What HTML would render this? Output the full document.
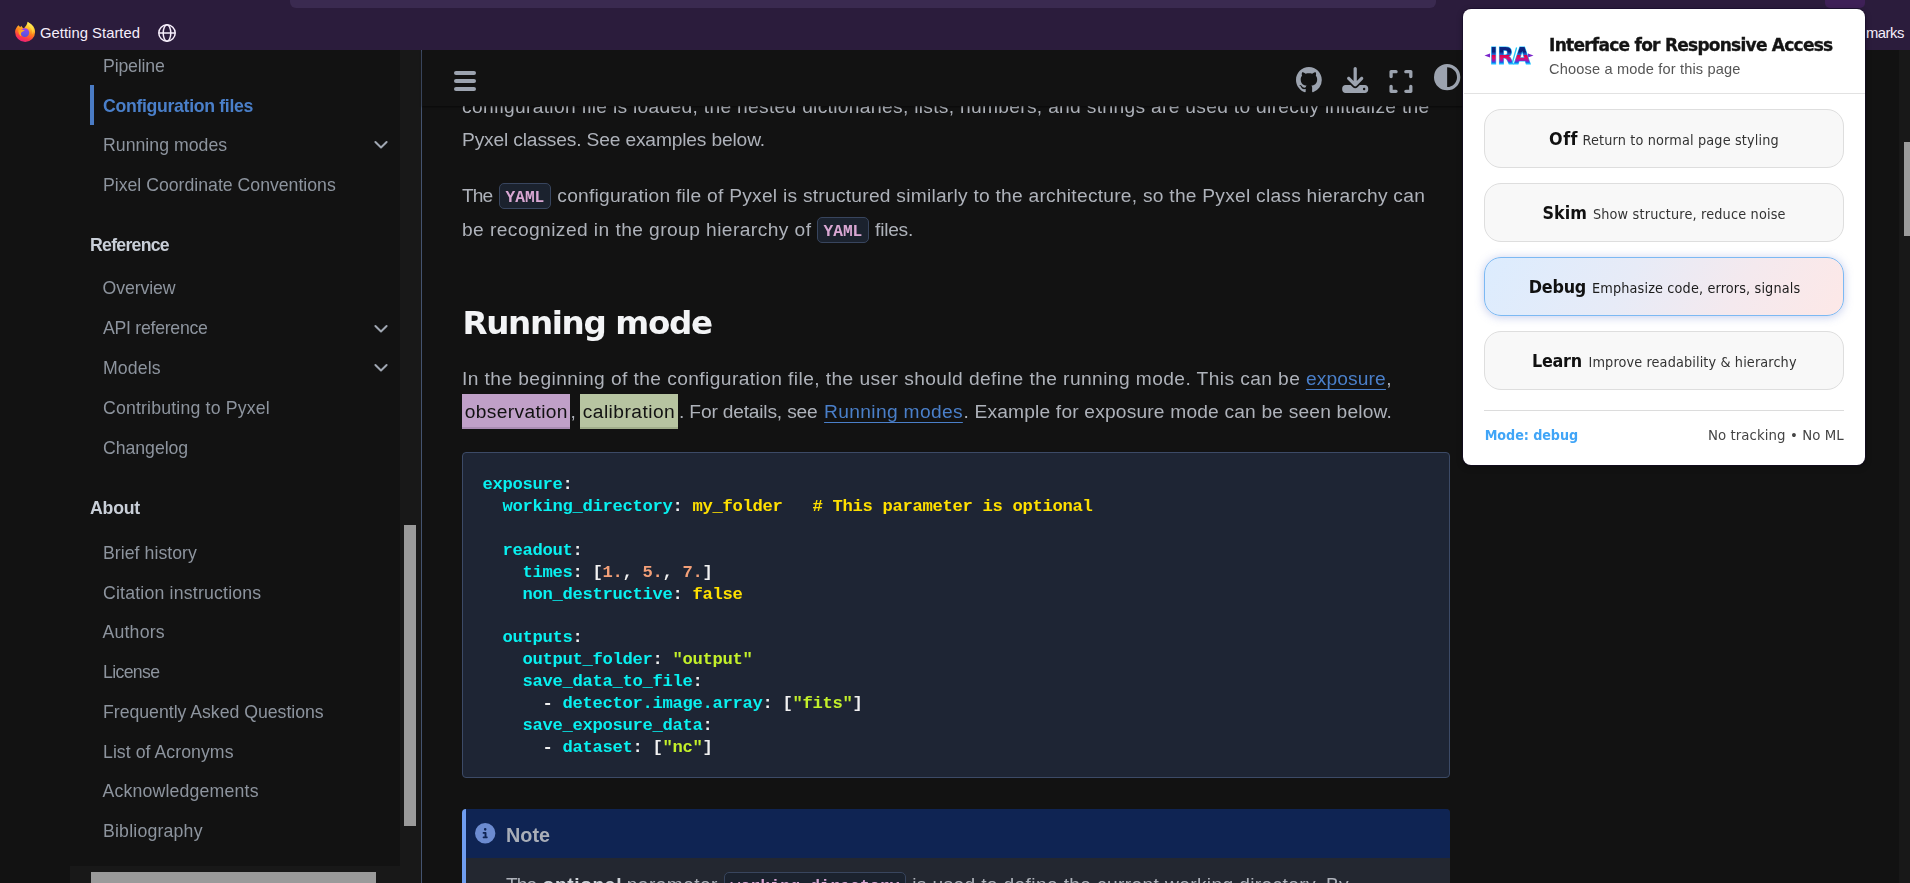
<!DOCTYPE html>
<html lang="en"><head><meta charset="utf-8"><title>Configuration files - Pyxel</title>
<style>
html,body{margin:0;padding:0;background:#121212;}
body{width:1910px;height:883px;overflow:hidden;position:relative;font-family:"Liberation Sans",sans-serif;}
.b{position:absolute;box-sizing:border-box;}
.t{position:absolute;line-height:0;white-space:pre;display:block;}
nav,main,header{will-change:transform;position:absolute;left:0;top:0;width:1910px;height:883px;}
.u{text-decoration:underline;text-decoration-thickness:1px;text-underline-offset:3.8px;}
svg{position:absolute;overflow:visible;}
</style></head><body>

<div class="b" style="left:400.00px;top:50.00px;width:21.00px;height:833.00px;background:#181818;"></div>
<div class="b" style="left:421.00px;top:50.00px;width:1.00px;height:833.00px;background:#44536f;"></div>
<div class="b" style="left:70.00px;top:866.00px;width:330.00px;height:17.00px;background:#181818;"></div>
<div class="b" style="left:91.00px;top:872.00px;width:285.00px;height:11.00px;background:#9a9a9a;"></div>
<div class="b" style="left:404.00px;top:525.00px;width:12.00px;height:301.00px;background:#9a9a9a;"></div>
<div class="b" style="left:1899.00px;top:50.00px;width:11.00px;height:833.00px;background:#181818;"></div>
<div class="b" style="left:1904.00px;top:142.00px;width:6.00px;height:94.00px;background:#9a9a9a;"></div>
<nav>
<div class="b" style="left:90.00px;top:85.00px;width:4.00px;height:40.00px;background:#4a7bc4;"></div>
<span id="t1" class="t" style="left:103.00px;top:66.10px;font-size:17.70px;color:#8d949e;letter-spacing:-0.162px;">Pipeline</span>
<span id="t2" class="t" style="left:103.00px;top:105.70px;font-size:17.70px;color:#4a7fc9;font-weight:700;letter-spacing:-0.324px;">Configuration files</span>
<span id="t3" class="t" style="left:103.00px;top:145.40px;font-size:17.70px;color:#8d949e;letter-spacing:0.017px;">Running modes</span>
<span id="t4" class="t" style="left:103.00px;top:185.00px;font-size:17.70px;color:#8d949e;letter-spacing:-0.009px;">Pixel Coordinate Conventions</span>
<span id="t5" class="t" style="left:90.00px;top:244.80px;font-size:17.70px;color:#c9cfd8;font-weight:700;letter-spacing:-0.731px;">Reference</span>
<span id="t6" class="t" style="left:102.60px;top:288.30px;font-size:17.70px;color:#8d949e;letter-spacing:-0.117px;">Overview</span>
<span id="t7" class="t" style="left:103.00px;top:328.40px;font-size:17.70px;color:#8d949e;letter-spacing:-0.271px;">API reference</span>
<span id="t8" class="t" style="left:103.00px;top:368.30px;font-size:17.70px;color:#8d949e;letter-spacing:0.114px;">Models</span>
<span id="t9" class="t" style="left:103.00px;top:408.20px;font-size:17.70px;color:#8d949e;letter-spacing:0.174px;">Contributing to Pyxel</span>
<span id="t10" class="t" style="left:103.00px;top:447.80px;font-size:17.70px;color:#8d949e;letter-spacing:-0.045px;">Changelog</span>
<span id="t11" class="t" style="left:90.00px;top:508.10px;font-size:17.70px;color:#c9cfd8;font-weight:700;letter-spacing:-0.220px;">About</span>
<span id="t12" class="t" style="left:103.00px;top:553.00px;font-size:17.70px;color:#8d949e;letter-spacing:0.042px;">Brief history</span>
<span id="t13" class="t" style="left:103.00px;top:592.70px;font-size:17.70px;color:#8d949e;letter-spacing:0.193px;">Citation instructions</span>
<span id="t14" class="t" style="left:102.50px;top:632.40px;font-size:17.70px;color:#8d949e;letter-spacing:0.189px;">Authors</span>
<span id="t15" class="t" style="left:103.00px;top:672.10px;font-size:17.70px;color:#8d949e;letter-spacing:-0.645px;">License</span>
<span id="t16" class="t" style="left:103.00px;top:711.90px;font-size:17.70px;color:#8d949e;letter-spacing:-0.021px;">Frequently Asked Questions</span>
<span id="t17" class="t" style="left:103.00px;top:751.60px;font-size:17.70px;color:#8d949e;letter-spacing:0.049px;">List of Acronyms</span>
<span id="t18" class="t" style="left:102.50px;top:791.30px;font-size:17.70px;color:#8d949e;letter-spacing:0.174px;">Acknowledgements</span>
<span id="t19" class="t" style="left:103.00px;top:831.00px;font-size:17.70px;color:#8d949e;letter-spacing:0.196px;">Bibliography</span>
<svg style="left:372.5px;top:138.5px" width="16" height="12" viewBox="0 0 16 12"><path d="M2.4 3 L8 8.500 L13.600 3" fill="none" stroke="#a0a7b2" stroke-width="2" stroke-linecap="round" stroke-linejoin="round"/></svg>
<svg style="left:372.5px;top:322.7px" width="16" height="12" viewBox="0 0 16 12"><path d="M2.4 3 L8 8.500 L13.600 3" fill="none" stroke="#a0a7b2" stroke-width="2" stroke-linecap="round" stroke-linejoin="round"/></svg>
<svg style="left:372.5px;top:362.3px" width="16" height="12" viewBox="0 0 16 12"><path d="M2.4 3 L8 8.500 L13.600 3" fill="none" stroke="#a0a7b2" stroke-width="2" stroke-linecap="round" stroke-linejoin="round"/></svg>
</nav>
<main>
<div class="b" style="left:499.00px;top:183.00px;width:52.00px;height:26.00px;background:#1b222e;border:1px solid #38455e;border-radius:5px;"></div>
<div class="b" style="left:817.00px;top:217.00px;width:52.00px;height:26.00px;background:#1b222e;border:1px solid #38455e;border-radius:5px;"></div>
<div class="b" style="left:462.00px;top:394.00px;width:108.00px;height:34.60px;background:#c0a0c8;border-bottom:2px solid #a98bb2;"></div>
<div class="b" style="left:580.00px;top:394.00px;width:98.00px;height:34.60px;background:#b7c4a1;border-bottom:2px solid #a0ad8a;"></div>
<span id="t20" class="t" style="left:462.00px;top:106.70px;font-size:19.20px;color:#aeb2ba;letter-spacing:0.309px;">configuration file is loaded, the nested dictionaries, lists, numbers, and strings are used to directly initialize the</span>
<span id="t21" class="t" style="left:462.00px;top:139.50px;font-size:19.20px;color:#aeb2ba;letter-spacing:-0.155px;">Pyxel classes. See examples below.</span>
<span id="t22" class="t" style="left:462.00px;top:195.60px;font-size:19.20px;color:#aeb2ba;letter-spacing:-0.889px;">The</span>
<span id="t23" class="t" style="left:505.50px;top:197.60px;font-size:16.20px;color:#d9a7d3;font-weight:700;font-family:'Liberation Mono', monospace;letter-spacing:-0.020px;">YAML</span>
<span id="t24" class="t" style="left:557.30px;top:195.60px;font-size:19.20px;color:#aeb2ba;letter-spacing:0.251px;">configuration file of Pyxel is structured similarly to the architecture, so the Pyxel class hierarchy can</span>
<span id="t25" class="t" style="left:462.00px;top:229.50px;font-size:19.20px;color:#aeb2ba;letter-spacing:0.426px;">be recognized in the group hierarchy of</span>
<span id="t26" class="t" style="left:823.50px;top:231.50px;font-size:16.20px;color:#d9a7d3;font-weight:700;font-family:'Liberation Mono', monospace;letter-spacing:-0.020px;">YAML</span>
<span id="t27" class="t" style="left:875.10px;top:229.50px;font-size:19.20px;color:#aeb2ba;letter-spacing:-0.251px;">files.</span>
<h2 id="t28" class="t" style="left:462.50px;top:322.50px;font-size:32.60px;color:#f3f4f6;font-weight:700;font-family:'DejaVu Sans', 'Liberation Sans', sans-serif;letter-spacing:-1.358px;margin:0;">Running mode</h2>
<span id="t29" class="t" style="left:462.00px;top:378.80px;font-size:19.20px;color:#aeb2ba;letter-spacing:0.413px;">In the beginning of the configuration file, the user should define the running mode. This can be</span>
<span id="t30" class="t u" style="left:1305.90px;top:378.80px;font-size:19.20px;color:#4a7fc9;letter-spacing:0.137px;">exposure</span>
<span id="t31" class="t" style="left:1386.20px;top:378.80px;font-size:19.20px;color:#aeb2ba;">,</span>
<span id="t32" class="t" style="left:464.70px;top:411.60px;font-size:19.20px;color:#121212;letter-spacing:0.360px;">observation</span>
<span id="t33" class="t" style="left:570.60px;top:411.60px;font-size:19.20px;color:#aeb2ba;">,</span>
<span id="t34" class="t" style="left:582.70px;top:411.60px;font-size:19.20px;color:#121212;letter-spacing:0.463px;">calibration</span>
<span id="t35" class="t" style="left:679.10px;top:411.60px;font-size:19.20px;color:#aeb2ba;letter-spacing:-0.191px;">. For details, see</span>
<span id="t36" class="t u" style="left:824.10px;top:411.60px;font-size:19.20px;color:#4a7fc9;letter-spacing:0.333px;">Running modes</span>
<span id="t37" class="t" style="left:963.40px;top:411.60px;font-size:19.20px;color:#aeb2ba;letter-spacing:0.183px;">. Example for exposure mode can be seen below.</span>
<div class="b" style="left:462.00px;top:452.00px;width:988.00px;height:325.50px;background:#1e2534;border:1px solid #3c4a66;border-radius:4px;"></div>
<pre style="margin:0">
<span id="t38" class="t" style="left:482.60px;top:485.00px;font-size:17.20px;color:#08f0f0;font-weight:700;font-family:'Liberation Mono', monospace;letter-spacing:-0.320px;">exposure</span>
<span id="t39" class="t" style="left:562.60px;top:485.00px;font-size:17.20px;color:#f1f1f1;font-weight:700;font-family:'Liberation Mono', monospace;letter-spacing:-0.320px;">:</span>
<span id="t40" class="t" style="left:502.60px;top:507.00px;font-size:17.20px;color:#08f0f0;font-weight:700;font-family:'Liberation Mono', monospace;letter-spacing:-0.320px;">working_directory</span>
<span id="t41" class="t" style="left:672.60px;top:507.00px;font-size:17.20px;color:#f1f1f1;font-weight:700;font-family:'Liberation Mono', monospace;letter-spacing:-0.320px;">:</span>
<span id="t42" class="t" style="left:692.60px;top:507.00px;font-size:17.20px;color:#ffe000;font-weight:700;font-family:'Liberation Mono', monospace;letter-spacing:-0.320px;">my_folder</span>
<span id="t43" class="t" style="left:812.60px;top:507.00px;font-size:17.20px;color:#ffe000;font-weight:700;font-family:'Liberation Mono', monospace;letter-spacing:-0.320px;"># This parameter is optional</span>
<span id="t44" class="t" style="left:502.60px;top:550.60px;font-size:17.20px;color:#08f0f0;font-weight:700;font-family:'Liberation Mono', monospace;letter-spacing:-0.320px;">readout</span>
<span id="t45" class="t" style="left:572.60px;top:550.60px;font-size:17.20px;color:#f1f1f1;font-weight:700;font-family:'Liberation Mono', monospace;letter-spacing:-0.320px;">:</span>
<span id="t46" class="t" style="left:522.60px;top:572.60px;font-size:17.20px;color:#08f0f0;font-weight:700;font-family:'Liberation Mono', monospace;letter-spacing:-0.320px;">times</span>
<span id="t47" class="t" style="left:572.60px;top:572.60px;font-size:17.20px;color:#f1f1f1;font-weight:700;font-family:'Liberation Mono', monospace;letter-spacing:-0.320px;">:</span>
<span id="t48" class="t" style="left:592.60px;top:572.60px;font-size:17.20px;color:#f1f1f1;font-weight:700;font-family:'Liberation Mono', monospace;letter-spacing:-0.320px;">[</span>
<span id="t49" class="t" style="left:602.60px;top:572.60px;font-size:17.20px;color:#f3a078;font-weight:700;font-family:'Liberation Mono', monospace;letter-spacing:-0.320px;">1.</span>
<span id="t50" class="t" style="left:622.60px;top:572.60px;font-size:17.20px;color:#f1f1f1;font-weight:700;font-family:'Liberation Mono', monospace;letter-spacing:-0.320px;">, </span>
<span id="t51" class="t" style="left:642.60px;top:572.60px;font-size:17.20px;color:#f3a078;font-weight:700;font-family:'Liberation Mono', monospace;letter-spacing:-0.320px;">5.</span>
<span id="t52" class="t" style="left:662.60px;top:572.60px;font-size:17.20px;color:#f1f1f1;font-weight:700;font-family:'Liberation Mono', monospace;letter-spacing:-0.320px;">, </span>
<span id="t53" class="t" style="left:682.60px;top:572.60px;font-size:17.20px;color:#f3a078;font-weight:700;font-family:'Liberation Mono', monospace;letter-spacing:-0.320px;">7.</span>
<span id="t54" class="t" style="left:702.60px;top:572.60px;font-size:17.20px;color:#f1f1f1;font-weight:700;font-family:'Liberation Mono', monospace;letter-spacing:-0.320px;">]</span>
<span id="t55" class="t" style="left:522.60px;top:594.50px;font-size:17.20px;color:#08f0f0;font-weight:700;font-family:'Liberation Mono', monospace;letter-spacing:-0.320px;">non_destructive</span>
<span id="t56" class="t" style="left:672.60px;top:594.50px;font-size:17.20px;color:#f1f1f1;font-weight:700;font-family:'Liberation Mono', monospace;letter-spacing:-0.320px;">:</span>
<span id="t57" class="t" style="left:692.60px;top:594.50px;font-size:17.20px;color:#ffe000;font-weight:700;font-family:'Liberation Mono', monospace;letter-spacing:-0.320px;">false</span>
<span id="t58" class="t" style="left:502.60px;top:637.90px;font-size:17.20px;color:#08f0f0;font-weight:700;font-family:'Liberation Mono', monospace;letter-spacing:-0.320px;">outputs</span>
<span id="t59" class="t" style="left:572.60px;top:637.90px;font-size:17.20px;color:#f1f1f1;font-weight:700;font-family:'Liberation Mono', monospace;letter-spacing:-0.320px;">:</span>
<span id="t60" class="t" style="left:522.60px;top:659.80px;font-size:17.20px;color:#08f0f0;font-weight:700;font-family:'Liberation Mono', monospace;letter-spacing:-0.320px;">output_folder</span>
<span id="t61" class="t" style="left:652.60px;top:659.80px;font-size:17.20px;color:#f1f1f1;font-weight:700;font-family:'Liberation Mono', monospace;letter-spacing:-0.320px;">:</span>
<span id="t62" class="t" style="left:672.60px;top:659.80px;font-size:17.20px;color:#c3f02a;font-weight:700;font-family:'Liberation Mono', monospace;letter-spacing:-0.320px;">"output"</span>
<span id="t63" class="t" style="left:522.60px;top:681.70px;font-size:17.20px;color:#08f0f0;font-weight:700;font-family:'Liberation Mono', monospace;letter-spacing:-0.320px;">save_data_to_file</span>
<span id="t64" class="t" style="left:692.60px;top:681.70px;font-size:17.20px;color:#f1f1f1;font-weight:700;font-family:'Liberation Mono', monospace;letter-spacing:-0.320px;">:</span>
<span id="t65" class="t" style="left:542.60px;top:703.60px;font-size:17.20px;color:#f1f1f1;font-weight:700;font-family:'Liberation Mono', monospace;letter-spacing:-0.320px;">- </span>
<span id="t66" class="t" style="left:562.60px;top:703.60px;font-size:17.20px;color:#08f0f0;font-weight:700;font-family:'Liberation Mono', monospace;letter-spacing:-0.320px;">detector.image.array</span>
<span id="t67" class="t" style="left:762.60px;top:703.60px;font-size:17.20px;color:#f1f1f1;font-weight:700;font-family:'Liberation Mono', monospace;letter-spacing:-0.320px;">:</span>
<span id="t68" class="t" style="left:782.60px;top:703.60px;font-size:17.20px;color:#f1f1f1;font-weight:700;font-family:'Liberation Mono', monospace;letter-spacing:-0.320px;">[</span>
<span id="t69" class="t" style="left:792.60px;top:703.60px;font-size:17.20px;color:#c3f02a;font-weight:700;font-family:'Liberation Mono', monospace;letter-spacing:-0.320px;">"fits"</span>
<span id="t70" class="t" style="left:852.60px;top:703.60px;font-size:17.20px;color:#f1f1f1;font-weight:700;font-family:'Liberation Mono', monospace;letter-spacing:-0.320px;">]</span>
<span id="t71" class="t" style="left:522.60px;top:725.50px;font-size:17.20px;color:#08f0f0;font-weight:700;font-family:'Liberation Mono', monospace;letter-spacing:-0.320px;">save_exposure_data</span>
<span id="t72" class="t" style="left:702.60px;top:725.50px;font-size:17.20px;color:#f1f1f1;font-weight:700;font-family:'Liberation Mono', monospace;letter-spacing:-0.320px;">:</span>
<span id="t73" class="t" style="left:542.60px;top:747.50px;font-size:17.20px;color:#f1f1f1;font-weight:700;font-family:'Liberation Mono', monospace;letter-spacing:-0.320px;">- </span>
<span id="t74" class="t" style="left:562.60px;top:747.50px;font-size:17.20px;color:#08f0f0;font-weight:700;font-family:'Liberation Mono', monospace;letter-spacing:-0.320px;">dataset</span>
<span id="t75" class="t" style="left:632.60px;top:747.50px;font-size:17.20px;color:#f1f1f1;font-weight:700;font-family:'Liberation Mono', monospace;letter-spacing:-0.320px;">:</span>
<span id="t76" class="t" style="left:652.60px;top:747.50px;font-size:17.20px;color:#f1f1f1;font-weight:700;font-family:'Liberation Mono', monospace;letter-spacing:-0.320px;">[</span>
<span id="t77" class="t" style="left:662.60px;top:747.50px;font-size:17.20px;color:#c3f02a;font-weight:700;font-family:'Liberation Mono', monospace;letter-spacing:-0.320px;">"nc"</span>
<span id="t78" class="t" style="left:702.60px;top:747.50px;font-size:17.20px;color:#f1f1f1;font-weight:700;font-family:'Liberation Mono', monospace;letter-spacing:-0.320px;">]</span>
</pre>
<div class="b" style="left:462.00px;top:809.00px;width:988.00px;height:80.00px;background:#232730;border-left:4px solid #6f9df0;border-radius:4px 4px 0 0;"></div>
<div class="b" style="left:466.00px;top:809.00px;width:984.00px;height:49.00px;background:#0f2453;border-radius:0 4px 0 0;"></div>
<svg style="left:475.4px;top:823.3px" width="20.4" height="20.4" viewBox="0 0 512 512"><path fill="#6c8bd0" d="M256 512A256 256 0 1 0 256 0a256 256 0 1 0 0 512zM216 336h24V272H216c-13.300 0-24-10.700-24-24s10.700-24 24-24h48c13.300 0 24 10.700 24 24v88h8c13.300 0 24 10.700 24 24s-10.700 24-24 24H216c-13.300 0-24-10.700-24-24s10.700-24 24-24zm40-208a32 32 0 1 1 0 64 32 32 0 1 1 0-64z"/></svg>
<div class="b" style="left:724.00px;top:872.00px;width:182.00px;height:26.00px;background:#1b222e;border:1px solid #38455e;border-radius:5px;"></div>
<span id="t79" class="t" style="left:506.00px;top:835.10px;font-size:19.80px;color:#a9aeb8;font-weight:700;letter-spacing:0.010px;">Note</span>
<span id="t80" class="t" style="left:506.00px;top:885.00px;font-size:19.20px;color:#aeb2ba;letter-spacing:-0.889px;">The</span>
<span id="t81" class="t" style="left:542.60px;top:885.00px;font-size:19.20px;color:#d0d4da;font-weight:700;letter-spacing:0.613px;">optional</span>
<span id="t82" class="t" style="left:626.80px;top:885.00px;font-size:19.20px;color:#aeb2ba;letter-spacing:0.406px;">parameter</span>
<span id="t83" class="t" style="left:730.50px;top:887.00px;font-size:16.20px;color:#d9a7d3;font-weight:700;font-family:'Liberation Mono', monospace;letter-spacing:0.241px;">working_directory</span>
<span id="t84" class="t" style="left:912.20px;top:885.00px;font-size:19.20px;color:#aeb2ba;letter-spacing:0.354px;">is used to define the current working directory. By</span>
</main>
<div class="b" style="left:422.00px;top:50.00px;width:1043.00px;height:56.00px;background:#121212;box-shadow:0 1px 2px rgba(0,0,0,.55);"></div>
<header>
<div class="b" style="left:453.80px;top:71.00px;width:22.60px;height:4.20px;background:#9ca3af;border-radius:2.1px;"></div>
<div class="b" style="left:453.80px;top:79.00px;width:22.60px;height:4.20px;background:#9ca3af;border-radius:2.1px;"></div>
<div class="b" style="left:453.80px;top:87.00px;width:22.60px;height:4.20px;background:#9ca3af;border-radius:2.1px;"></div>
<svg style="left:1296.2px;top:67.4px" width="25.8" height="25.2" viewBox="0 0 16 15.62"><path fill="#9ca3af" d="M8 0C3.58 0 0 3.58 0 8c0 3.54 2.29 6.53 5.47 7.59.4.07.55-.17.55-.38 0-.19-.01-.82-.01-1.49-2.01.37-2.53-.49-2.69-.94-.09-.23-.48-.94-.82-1.13-.28-.15-.68-.52-.01-.53.63-.01 1.08.58 1.23.82.72 1.21 1.87.87 2.33.66.07-.52.28-.87.51-1.07-1.78-.2-3.64-.89-3.64-3.95 0-.87.31-1.59.82-2.15-.08-.2-.36-1.02.08-2.12 0 0 .67-.21 2.2.82.64-.18 1.32-.27 2-.27s1.36.09 2 .27c1.53-1.04 2.2-.82 2.2-.82.44 1.1.16 1.92.08 2.12.51.56.82 1.27.82 2.15 0 3.07-1.87 3.75-3.65 3.95.29.25.54.73.54 1.48 0 1.07-.01 1.93-.01 2.2 0 .21.15.46.55.38A8.013 8.013 0 0016 8c0-4.42-3.58-8-8-8z"/></svg>
<svg style="left:1341.8px;top:67px" width="26.4" height="26" viewBox="0 0 512 512"><path fill="#9ca3af" d="M288 32c0-17.700-14.300-32-32-32s-32 14.300-32 32V274.700l-73.400-73.400c-12.500-12.500-32.800-12.500-45.300 0s-12.500 32.800 0 45.300l128 128c12.500 12.500 32.800 12.500 45.300 0l128-128c12.500-12.500 12.500-32.800 0-45.300s-32.800-12.500-45.300 0L288 274.700V32zM64 352c-35.300 0-64 28.700-64 64v32c0 35.300 28.700 64 64 64H448c35.300 0 64-28.700 64-64V416c0-35.300-28.700-64-64-64H346.500l-45.300 45.300c-25 25-65.500 25-90.500 0L165.500 352H64zm368 56a24 24 0 1 1 0 48 24 24 0 1 1 0-48z"/></svg>
<svg style="left:1388.9px;top:69.7px" width="23.9" height="23" viewBox="0 32 448 448"><path fill="#9ca3af" d="M32 32C14.300 32 0 46.300 0 64v96c0 17.700 14.300 32 32 32s32-14.300 32-32V96h64c17.700 0 32-14.300 32-32s-14.300-32-32-32H32zM64 352c0-17.700-14.300-32-32-32s-32 14.300-32 32v96c0 17.700 14.300 32 32 32h96c17.700 0 32-14.300 32-32s-14.300-32-32-32H64V352zM320 32c-17.700 0-32 14.300-32 32s14.300 32 32 32h64v64c0 17.700 14.300 32 32 32s32-14.300 32-32V64c0-17.700-14.300-32-32-32H320zM448 352c0-17.700-14.300-32-32-32s-32 14.300-32 32v64H320c-17.700 0-32 14.300-32 32s14.300 32 32 32h96c17.700 0 32-14.300 32-32V352z"/></svg>
<svg style="left:1433.9px;top:64px" width="26.3" height="26.3" viewBox="0 0 512 512"><path fill="#9ca3af" d="M448 256c0-106-86-192-192-192V448c106 0 192-86 192-192zM0 256a256 256 0 1 1 512 0A256 256 0 1 1 0 256z"/></svg>
</header>
<div class="b" style="left:0.00px;top:0.00px;width:1910.00px;height:50.00px;background:#2b1c3c;"></div>
<div class="b" style="left:0.00px;top:49.00px;width:1910.00px;height:1.00px;background:linear-gradient(90deg,#2f1d41 0%%,#3c2152 14%%,#6a2a80 30%%,#7c2c90 38%%,#5a2870 47%%,#38204d 58%%,#2d1c3e 72%%,#2b1c3c 100%%);"></div>
<div class="b" style="left:290.00px;top:-8.00px;width:1146.00px;height:16.00px;background:#3a2a50;border-radius:6px;"></div>
<div class="b" style="left:1825.00px;top:-8.00px;width:40.00px;height:15.50px;background:#3e2057;border-radius:5px;"></div>
<svg style="left:14px;top:21px" width="22" height="22" viewBox="0 0 22 22">
<defs><linearGradient id="fxo" gradientUnits="userSpaceOnUse" x1="16" y1="1" x2="8" y2="21.500"><stop offset="0" stop-color="#fff35e"/><stop offset=".28" stop-color="#ffc02c"/><stop offset=".52" stop-color="#ff7d1c"/><stop offset=".76" stop-color="#ff3b47"/><stop offset="1" stop-color="#e81a86"/></linearGradient>
<linearGradient id="fxi" x1="0" y1="0" x2="0" y2="1"><stop offset="0" stop-color="#a03af0"/><stop offset=".55" stop-color="#6a55e6"/><stop offset="1" stop-color="#5a4fd8"/></linearGradient>
<linearGradient id="fxh" x1="0" y1="0" x2="1" y2="1"><stop offset="0" stop-color="#ff9a1c"/><stop offset="1" stop-color="#ffc21f"/></linearGradient></defs>
<path fill="url(#fxo)" d="M4.400 4.300C2.500 6.200 1.100 8.500 1.100 11A10 10 0 0 0 21.100 11C21.100 8.200 20 5.800 18.300 4.200C17.200 3.100 15.500 2 13.600 0.800C13.300 2.800 12.400 4.600 11.200 5.800L9.900 7.600C9 7 7.900 6 7.200 4.800L6.300 6.300Z"/>
<circle cx="10.900" cy="11.600" r="4.300" fill="url(#fxi)"/>
<path fill="url(#fxh)" d="M4.300 8.200C6.500 8.600 9 8.500 11 9.700C9.400 9.900 8 10.500 7.200 11.800C6.600 13 6.900 14.500 7.600 15.500C5.300 14.400 3.900 11.400 4.300 8.200Z"/>
<path fill="#ffe94f" opacity=".55" d="M13.600 0.800C15.800 2.400 18.800 4.500 19.600 8C19.900 9.800 19.400 11.800 18.400 13.300C18.800 10.500 17.800 8.300 16.100 6.800C14.800 5.500 13.800 3.500 13.600 0.800Z"/>
</svg>
<svg style="left:156.800px;top:22.850px" width="20" height="20" viewBox="0 0 20 20"><g fill="none" stroke="#f6eefb" stroke-width="1.500"><circle cx="10" cy="10" r="8.200"/><ellipse cx="10" cy="10" rx="3.800" ry="8.200"/><path d="M1.800 10h16.400"/></g></svg>
<span id="t85" class="t" style="left:40.00px;top:32.50px;font-size:14.80px;color:#f6eefb;letter-spacing:0.033px;">Getting Started</span>
<span id="t86" class="t" style="left:1866.00px;top:32.50px;font-size:14.80px;color:#f6eefb;letter-spacing:-0.470px;">marks</span>
<div class="b" style="left:1463.20px;top:9.30px;width:401.70px;height:455.30px;background:#ffffff;border-radius:8px;box-shadow:0 0 0 1px rgba(20,10,40,.55),0 2px 6px rgba(0,0,0,.35);"></div>
<svg style="left:1483px;top:40px" width="52" height="30" viewBox="0 0 52 30">
<defs><linearGradient id="ira" gradientUnits="userSpaceOnUse" x1="0" y1="6.600" x2="0" y2="23.600"><stop offset="0" stop-color="#0b2a86"/><stop offset=".3" stop-color="#0a1f7a"/><stop offset=".46" stop-color="#1668da"/><stop offset=".5" stop-color="#d8004c"/><stop offset=".68" stop-color="#e0106a"/><stop offset=".84" stop-color="#8a1fc0"/><stop offset=".93" stop-color="#1d5fe6"/><stop offset="1" stop-color="#19b4ff"/></linearGradient></defs>
<path d="M1.500 15.500 L7 13.600 L7 17.400 Z M50.500 15.500 L45 13.600 L45 17.400 Z" fill="#7b25c9"/>
<text x="27" y="23.600" text-anchor="middle" font-family="'DejaVu Sans','Liberation Sans',sans-serif" font-weight="700" font-size="23.300" textLength="40.500" lengthAdjust="spacingAndGlyphs" fill="url(#ira)" stroke="#27c6ff" stroke-width="1.100" paint-order="stroke">IRA</text>
<path d="M29.300 23 L33.600 7.500" stroke="#22c8f5" stroke-width="1.300" fill="none"/>
</svg>
<div class="b" style="left:1464.00px;top:93.00px;width:400.50px;height:1.00px;background:#e2e2e2;"></div>
<div class="b" style="left:1484.00px;top:109.30px;width:359.70px;height:58.40px;background:#f8f8f8;border:1px solid #dedede;border-radius:17px;"></div>
<div class="b" style="left:1484.00px;top:183.20px;width:359.70px;height:58.40px;background:#f8f8f8;border:1px solid #dedede;border-radius:17px;"></div>
<div class="b" style="left:1484.00px;top:257.40px;width:359.70px;height:58.30px;background:linear-gradient(120deg,#dcecfe 0%,#e7ebf7 40%,#f4e9ee 70%,#fde8e7 100%);border:1px solid #7cb9f3;border-radius:17px;box-shadow:0 1px 10px rgba(90,110,200,.36);"></div>
<div class="b" style="left:1484.00px;top:331.30px;width:359.70px;height:58.40px;background:#f8f8f8;border:1px solid #dedede;border-radius:17px;"></div>
<div class="b" style="left:1484.00px;top:410.00px;width:360.00px;height:1.00px;background:#dcdcdc;"></div>
<span id="t87" class="t" style="left:1549.10px;top:45.00px;font-size:17.00px;color:#141414;font-weight:700;font-family:'DejaVu Sans', 'Liberation Sans', sans-serif;letter-spacing:-0.746px;-webkit-text-stroke:0.35px #141414;">Interface for Responsive Access</span>
<span id="t88" class="t" style="left:1549.00px;top:69.10px;font-size:14.60px;color:#555555;letter-spacing:0.154px;">Choose a mode for this page</span>
<span id="t89" class="t" style="left:1549.10px;top:139.10px;font-size:17.80px;color:#111111;font-weight:700;font-family:'DejaVu Sans Condensed', 'DejaVu Sans', 'Liberation Sans', sans-serif;letter-spacing:0.469px;">Off</span>
<span id="t90" class="t" style="left:1582.50px;top:140.10px;font-size:14.30px;color:#333333;font-family:'DejaVu Sans Condensed', 'DejaVu Sans', 'Liberation Sans', sans-serif;letter-spacing:0.156px;">Return to normal page styling</span>
<span id="t91" class="t" style="left:1542.50px;top:212.80px;font-size:17.80px;color:#111111;font-weight:700;font-family:'DejaVu Sans Condensed', 'DejaVu Sans', 'Liberation Sans', sans-serif;letter-spacing:0.029px;">Skim</span>
<span id="t92" class="t" style="left:1592.90px;top:213.80px;font-size:14.30px;color:#333333;font-family:'DejaVu Sans Condensed', 'DejaVu Sans', 'Liberation Sans', sans-serif;letter-spacing:0.178px;">Show structure, reduce noise</span>
<span id="t93" class="t" style="left:1528.70px;top:286.70px;font-size:17.80px;color:#111111;font-weight:700;font-family:'DejaVu Sans Condensed', 'DejaVu Sans', 'Liberation Sans', sans-serif;letter-spacing:-0.209px;">Debug</span>
<span id="t94" class="t" style="left:1592.00px;top:287.70px;font-size:14.30px;color:#1c1c1c;font-family:'DejaVu Sans Condensed', 'DejaVu Sans', 'Liberation Sans', sans-serif;letter-spacing:0.147px;">Emphasize code, errors, signals</span>
<span id="t95" class="t" style="left:1532.00px;top:360.70px;font-size:17.80px;color:#111111;font-weight:700;font-family:'DejaVu Sans Condensed', 'DejaVu Sans', 'Liberation Sans', sans-serif;letter-spacing:-0.256px;">Learn</span>
<span id="t96" class="t" style="left:1588.50px;top:361.70px;font-size:14.30px;color:#333333;font-family:'DejaVu Sans Condensed', 'DejaVu Sans', 'Liberation Sans', sans-serif;letter-spacing:0.130px;">Improve readability &amp; hierarchy</span>
<span id="t97" class="t" style="left:1484.70px;top:434.70px;font-size:14.20px;color:#41a5f7;font-weight:700;font-family:'DejaVu Sans Condensed', 'DejaVu Sans', 'Liberation Sans', sans-serif;letter-spacing:-0.058px;">Mode: debug</span>
<span id="t98" class="t" style="left:1707.90px;top:434.70px;font-size:14.80px;color:#454545;font-family:'DejaVu Sans Condensed', 'DejaVu Sans', 'Liberation Sans', sans-serif;letter-spacing:0.082px;">No tracking • No ML</span>
</body></html>
